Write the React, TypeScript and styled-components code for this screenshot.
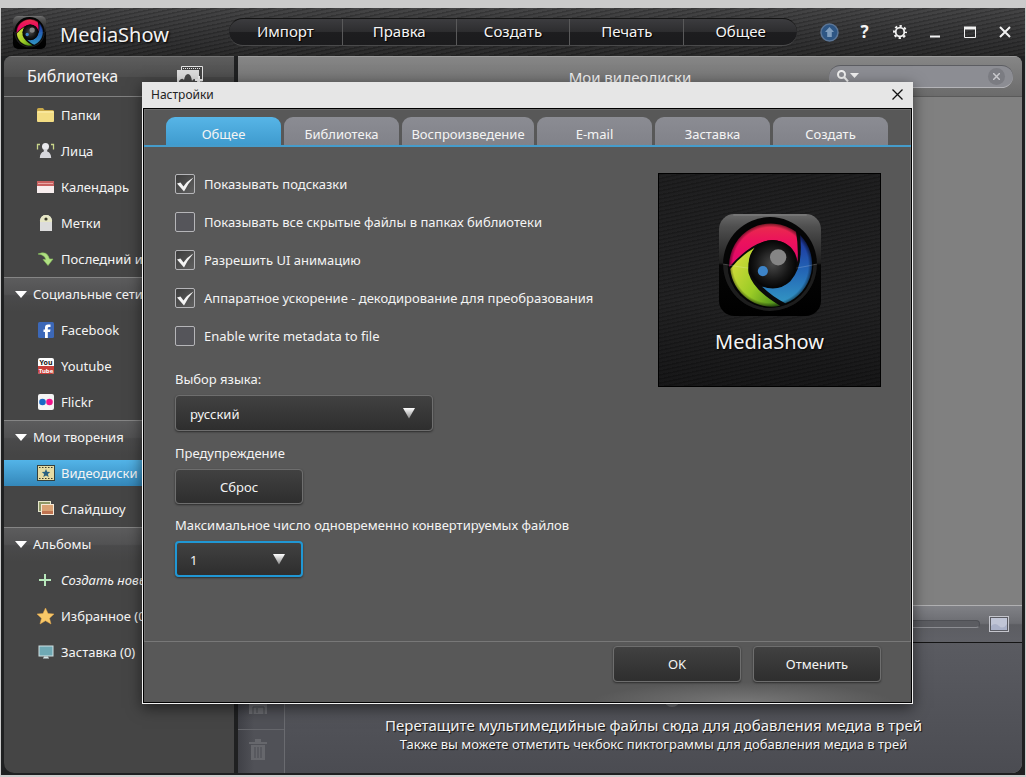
import React, { useId } from "react";
import styled, { createGlobalStyle, css } from "styled-components";

const GlobalStyle = createGlobalStyle`
  *, *::before, *::after { box-sizing: border-box; }
  html, body { margin: 0; padding: 0; background: #cbcbcb; }
  body, button, input, select {
    font-family: "Noto Sans", "Open Sans", "Liberation Sans", sans-serif;
    font-size: 13px;
    line-height: 20px;
    color: #f4f4f4;
  }
  button { padding: 0; border: 0; background: none; cursor: pointer; }
  ul { list-style: none; margin: 0; padding: 0; }
  h1, h2, h3, p { margin: 0; font-weight: 400; }
  svg { display: block; flex: none; }
`;

const weave = css`
  background-image:
    repeating-linear-gradient(168deg, rgba(0, 0, 0, 0.14) 0 1px, rgba(255, 255, 255, 0.02) 2px 4px),
    linear-gradient(#414142, #323233 50%, #262626);
`;

const Page = styled.div`
  position: relative;
  min-height: 100vh;
  padding: 8px 1px 2px;
  display: flex;
`;

const AppWindow = styled.div`
  flex: 1;
  min-width: 0;
  display: flex;
  flex-direction: column;
  background: #1f2021;
`;

/* ---------- header ---------- */

const Header = styled.header`
  display: flex;
  align-items: center;
  height: 48px;
  padding: 0 3px 0 12px;
  ${weave}
`;

const Brand = styled.div`
  display: flex;
  align-items: center;
  gap: 14px;
  width: 216px;
  flex: none;
`;

const BrandName = styled.h1`
  font-size: 20px;
  line-height: 28px;
  padding-top: 6px;
  color: #f2f2f2;
  text-shadow: 1px 1px 2px #000;
`;

const MenuBar = styled.nav`
  flex: 1;
  display: flex;
  height: 28px;
  border-radius: 14px;
  overflow: hidden;
  border-top: 1px solid #141414;
  border-bottom: 1px solid #4a4a4b;
  background: linear-gradient(#3c3c3f, #2d2d2f 48%, #1d1d1f 52%, #1b1b1d);
`;

const MenuButton = styled.button`
  flex: 1;
  padding-bottom: 2px;
  font-size: 15px;
  text-shadow: 1px 1px 1px #000;
  & + & { border-left: 1px solid #59595a; }
`;

const WindowControls = styled.div`
  display: flex;
  margin-left: 15px;
`;

const ControlButton = styled.button`
  width: 35px;
  height: 28px;
  display: grid;
  place-items: center;
  font-size: 17px;
  font-weight: 700;
`;

/* ---------- workspace ---------- */

const Workspace = styled.div`
  flex: 1;
  display: flex;
  gap: 4px;
  padding: 0 3px 2px;
`;

const Sidebar = styled.aside`
  width: 230px;
  flex: none;
  background: #454545;
  border-radius: 8px 0 0 10px;
  overflow: hidden;
`;

const SidebarHeader = styled.div`
  display: flex;
  justify-content: space-between;
  align-items: center;
  height: 41px;
  padding: 0 31px 2px 23px;
  border-top: 1px solid #747474;
  border-bottom: 1px solid #818181;
  background: linear-gradient(#5d5d5d, #4e4e4e 50%, #454545 52%, #454545);
`;

const SidebarTitle = styled.h2`
  font-size: 16px;
  line-height: 24px;
`;

const SectionHeader = styled.h3`
  display: flex;
  align-items: center;
  gap: 6px;
  height: 35px;
  padding: 0 0 2px 11px;
  font-size: 13px;
  border-top: 1px solid #858585;
  background: linear-gradient(#5c5c5d, #525253 48%, #4a4a4b 52%, #454545);
`;

const NavItem = styled.li`
  padding: 5px 0;
`;

const NavLink = styled.a<{ $active?: boolean; $italic?: boolean }>`
  display: flex;
  align-items: center;
  gap: 6px;
  height: 26px;
  padding-left: 32px;
  color: #f4f4f4;
  text-decoration: none;
  white-space: nowrap;
  font-style: ${(p) => (p.$italic ? "italic" : "normal")};
  background: ${(p) => (p.$active ? "linear-gradient(#53b4e8, #3487b9)" : "none")};
`;

const Main = styled.main`
  flex: 1;
  min-width: 0;
  display: flex;
  flex-direction: column;
  border-radius: 0 8px 10px 0;
  overflow: hidden;
  background: #808080;
`;

const MainHeader = styled.div`
  display: grid;
  grid-template-columns: 1fr auto 1fr;
  align-items: center;
  height: 41px;
  padding: 0 9px;
  border-top: 1px solid #9b9b9b;
  border-bottom: 1px solid #5a5a5a;
  background: linear-gradient(#868686, #6b6b6b);
`;

const MainTitle = styled.h2`
  grid-column: 2;
  font-size: 15px;
  line-height: 20px;
`;

const SearchBox = styled.label`
  justify-self: end;
  display: flex;
  align-items: center;
  width: 184px;
  height: 23px;
  padding: 0 8px;
  gap: 2px;
  border-radius: 12px;
  border-top: 1px solid #5c5d62;
  border-bottom: 1px solid #b4b4b8;
  background: #8c8d93;
`;

const SearchInput = styled.input`
  flex: 1;
  min-width: 0;
  height: 20px;
  padding: 0 4px;
  border: 0;
  outline: 0;
  background: transparent;
`;

const ClearButton = styled.button`
  width: 17px;
  height: 17px;
  border-radius: 9px;
  display: grid;
  place-items: center;
  background: #7b7c82;
`;

const Canvas = styled.section`
  flex: 1;
`;

const ZoomBar = styled.div`
  display: flex;
  align-items: center;
  justify-content: flex-end;
  gap: 9px;
  height: 38px;
  padding-right: 13px;
  border-top: 1px solid #b0b0b2;
  border-bottom: 1px solid #141414;
  background: linear-gradient(#808186, #6b6c71 48%, #5c5d62 52%, #606167);
`;

const ZoomSlider = styled.input`
  appearance: none;
  width: 120px;
  height: 8px;
  margin: 0;
  border-radius: 4px;
  border: 1px solid #4e4f54;
  border-bottom-color: #8c8d92;
  background: #5b5c61;
  &::-webkit-slider-thumb {
    appearance: none;
    width: 8px;
    height: 8px;
    border-radius: 4px;
    background: #9a9ba0;
  }
`;

const Tray = styled.section`
  display: flex;
  height: 130px;
  background: linear-gradient(#5a5b61, #4b4c52);
`;

const TrayTools = styled.div`
  width: 47px;
  flex: none;
  display: flex;
  flex-direction: column;
  justify-content: flex-end;
  border-right: 1px solid #6a6b70;
  background: linear-gradient(90deg, #404147, #505157 16px);
`;

const TrayTool = styled.button`
  height: 44px;
  padding: 0 6px 4px 0;
  display: grid;
  place-items: center;
  & + & { border-top: 1px solid #65666b; }
`;

const TrayHint = styled.div`
  flex: 1;
  display: flex;
  flex-direction: column;
  align-items: center;
  justify-content: flex-end;
  padding-bottom: 20px;
  text-shadow: 1px 1px 1px #111;
`;

const TrayKnob = styled.span`
  width: 16px;
  height: 16px;
  margin: 0 0 8px 36px;
  border-radius: 8px;
  background: #77787d;
`;

const TrayLead = styled.p`
  font-size: 15px;
  line-height: 20px;
`;

const TrayNote = styled.p`
  font-size: 13px;
  line-height: 18px;
`;

/* ---------- settings dialog ---------- */

const DialogLayer = styled.div`
  position: absolute;
  inset: 0;
  padding: 82px 113px 0 142px;
`;

const Dialog = styled.div`
  padding: 0 1px 1px;
  background: #f2f2f2;
  box-shadow: 0 4px 14px rgba(0, 0, 0, 0.55);
`;

const DialogTitleBar = styled.div`
  display: flex;
  align-items: center;
  justify-content: space-between;
  height: 26px;
  margin: 0 -1px;
  padding: 0 10px 2px 9px;
  background: #e6e6e6;
`;

const DialogTitle = styled.h2`
  font-size: 12px;
  line-height: 18px;
  padding-top: 2px;
  color: #222;
`;

const DialogClose = styled.button`
  width: 12px;
  height: 22px;
  display: grid;
  place-items: center;
`;

const DialogBody = styled.div`
  border: 1px solid #000;
  background: #585858;
  box-shadow: inset 0 0 0 1px #6c6c6c;
`;

const TabList = styled.div`
  display: flex;
  gap: 3px;
  padding: 8px 23px 0 22px;
  border-bottom: 2px solid #459ccb;
`;

const Tab = styled.button<{ $active?: boolean; $wide?: boolean }>`
  flex: ${(p) => (p.$wide ? "132 1 0" : "115 1 0")};
  min-width: 0;
  height: 28px;
  padding-top: 5px;
  line-height: 22px;
  border-radius: 9px 9px 0 0;
  background: ${(p) => (p.$active ? "linear-gradient(#57b5e7, #3f9bce)" : "linear-gradient(#8b8c93, #818289)")};
`;

const Panel = styled.div`
  display: flex;
  justify-content: space-between;
  align-items: flex-start;
  height: 494px;
  padding: 26px 30px 0 31px;
`;

const Settings = styled.div`
  display: flex;
  flex-direction: column;
  align-items: flex-start;
`;

const CheckList = styled.div`
  display: flex;
  flex-direction: column;
  gap: 16px;
  margin-bottom: 22px;
`;

const CheckRow = styled.label`
  display: flex;
  align-items: center;
  gap: 9px;
  height: 22px;
  white-space: nowrap;
`;

const CheckMark = styled.span`
  display: grid;
  & > * { grid-area: 1 / 1; }
  & > input:not(:checked) + svg { visibility: hidden; }
  & > svg { pointer-events: none; }
`;

const CheckInput = styled.input`
  appearance: none;
  width: 20px;
  height: 20px;
  margin: 0;
  border: 1px solid #b5b5b8;
  border-radius: 2px;
  background: #55555a;
  &:checked { background: linear-gradient(135deg, #3c3c3c, #606060); }
`;

const FieldLabel = styled.label`
  height: 20px;
  margin-bottom: 6px;
  white-space: nowrap;
`;

const raised = css`
  border: 1px solid #6e6e6e;
  border-radius: 4px;
  background: linear-gradient(#414141, #2e2e2e);
  box-shadow: 0 1px 2px rgba(0, 0, 0, 0.5);
`;

const SelectWrap = styled.span<{ $wide?: boolean }>`
  display: grid;
  align-items: center;
  width: ${(p) => (p.$wide ? "258px" : "128px")};
  margin-bottom: 12px;
  & > * { grid-area: 1 / 1; }
  & > svg { justify-self: end; margin-right: 18px; pointer-events: none; }
`;

const SelectBox = styled.select<{ $focused?: boolean }>`
  appearance: none;
  width: 100%;
  height: 36px;
  padding: 2px 14px 0;
  outline: 0;
  ${raised}
  ${(p) => p.$focused && css`
    border: 2px solid #2097d4;
    padding-left: 13px;
  `}
`;

const PushButton = styled.button`
  width: 128px;
  height: 36px;
  ${raised}
`;

const FieldButton = styled(PushButton)`
  height: 35px;
  margin-bottom: 11px;
`;

const Preview = styled.figure`
  display: flex;
  flex-direction: column;
  align-items: center;
  width: 223px;
  height: 214px;
  margin: 0;
  padding-top: 40px;
  border: 1px solid #000;
  background-image:
    repeating-linear-gradient(168deg, rgba(0, 0, 0, 0.12) 0 1px, rgba(255, 255, 255, 0.01) 2px 4px),
    linear-gradient(#1c1c1d, #1f1f20 60%, #141415);
`;

const PreviewCaption = styled.figcaption`
  margin-top: 12px;
  font-size: 20px;
  line-height: 28px;
  text-shadow: 1px 1px 2px #000;
`;

const DialogFooter = styled.div`
  display: flex;
  justify-content: flex-end;
  gap: 12px;
  height: 61px;
  padding: 4px 30px 0;
  border-top: 1px solid #787878;
  background: radial-gradient(ellipse 150px 20px at 78% 100%, #777 0, #585858 100%);
`;

/* ---------- drawings ---------- */

function Logo({ size }: { size: number }) {
  const id = useId().replace(/[^a-zA-Z0-9]/g, "");
  const u = (n: string) => `url(#${id}${n})`;
  return (
    <svg width={size} height={size} viewBox="0 0 100 100" aria-hidden="true">
      <defs>
        <linearGradient id={id + "case"} x1="0" y1="0" x2="0" y2="1">
          <stop offset="0" stopColor="#6a6a6a" />
          <stop offset="0.12" stopColor="#505050" />
          <stop offset="0.48" stopColor="#1e1e1e" />
          <stop offset="0.5" stopColor="#050505" />
          <stop offset="1" stopColor="#000" />
        </linearGradient>
        <linearGradient id={id + "pink"} x1="0" y1="0" x2="0" y2="1">
          <stop offset="0" stopColor="#e8304a" />
          <stop offset="0.4" stopColor="#ec125c" />
          <stop offset="1" stopColor="#e0046e" />
        </linearGradient>
        <linearGradient id={id + "green"} x1="0" y1="0.3" x2="1" y2="1">
          <stop offset="0" stopColor="#d2dc3a" />
          <stop offset="0.5" stopColor="#9acb26" />
          <stop offset="1" stopColor="#41891a" />
        </linearGradient>
        <linearGradient id={id + "blue"} x1="0" y1="0" x2="0" y2="1">
          <stop offset="0" stopColor="#1c2f9c" />
          <stop offset="0.5" stopColor="#2363b4" />
          <stop offset="1" stopColor="#3296c4" />
        </linearGradient>
        <radialGradient id={id + "eye"}>
          <stop offset="0" stopColor="#4a4a4a" />
          <stop offset="0.7" stopColor="#161616" />
          <stop offset="1" stopColor="#050505" />
        </radialGradient>
        <radialGradient id={id + "rim"}>
          <stop offset="0.88" stopColor="#000" stopOpacity="0" />
          <stop offset="1" stopColor="#000" stopOpacity="0.7" />
        </radialGradient>
      </defs>
      <rect width="100" height="100" rx="15" fill={u("case")} />
      <circle cx="50" cy="49" r="46" fill="#050505" />
      <path d="M4 49a46 46 0 0 0 92 0" fill="#1d1d1d" />
      <circle cx="50.500" cy="50" r="42" fill="#0a0a0a" />
      <path d="M10 52A41 41 0 0 1 75.500 17.500Q78 32 77 47Q74 27 52 25.500Q32 27 10 52Z" fill={u("pink")} />
      <path d="M79.500 20.500A41 41 0 0 1 65 87.500Q52 81 42 71Q58 77 70 66Q80 54 80 38Q80.500 30 79.500 20.500Z" fill={u("blue")} />
      <path d="M11 54Q21 41 35 33Q27 46 29 58Q34 75 60 90A41 41 0 0 1 11 54Z" fill={u("green")} />
      <circle cx="50.500" cy="50" r="42" fill={u("rim")} />
      <circle cx="52.500" cy="49" r="23.500" fill={u("eye")} />
      <path d="M4 49Q26 53 29 53M76 53Q88 51 96 49" stroke="#fff" fill="none" opacity="0.18" />
      <circle cx="58" cy="42.500" r="8" fill="#858585" />
      <circle cx="43" cy="56" r="5" fill="#3d84c8" />
      <path d="M14 1H86" stroke="#8a8a8a" strokeWidth="1.500" opacity="0.5" />
    </svg>
  );
}

const iconShapes: Record<string, React.ReactNode> = {
  folder: (
    <>
      <path d="M1 3.500Q1 2 2.500 2H7l1.500 2H16.500Q18 4 18 5.500V6H1Z" fill="#c9a94a" />
      <rect x="1" y="5" width="17" height="11" rx="1" fill="#f3dd83" />
      <path d="M1.500 6H17.500" stroke="#fff1b4" />
    </>
  ),
  faces: (
    <>
      <path d="M4 2.500H1.500V7.500M15 2.500h2.500V7.500" fill="none" stroke="#c9d68a" strokeWidth="1.300" />
      <circle cx="9.500" cy="4.500" r="3.500" fill="#e8e8ec" />
      <path d="M7.800 7h3.400v2.500q3.800 1 4 6.500H3.800q.2-5.500 4-6.500Z" fill="#d6d6db" />
    </>
  ),
  calendar: (
    <>
      <rect x="1" y="3" width="17" height="12" fill="#f8eeee" />
      <rect x="1" y="3" width="17" height="5" fill="#c8605f" />
      <path d="M2 5.500H17" stroke="#e8a8a6" />
    </>
  ),
  tag: (
    <>
      <path d="M4 17V6.500Q5 1 10 1T16 6.500V17Z" fill="#dcdcdc" />
      <path d="M4 8V6.500Q5 1 10 1T16 6.500V8Z" fill="#e6e6c4" />
      <circle cx="10" cy="5" r="1.600" fill="#3a3a2a" />
    </>
  ),
  recent: (
    <path d="M2 4Q11 0 13.500 9H17L12 15.500 7 9.500H9.800Q8.500 4.500 2 4Z" fill="#b0e082" stroke="#86bd5c" strokeWidth="0.600" />
  ),
  facebook: (
    <>
      <rect x="2" y="1" width="16" height="16" rx="1.500" fill="#3c68b8" />
      <path d="M9 17V11H7.500V8.500H9V6.500Q9 3.500 12 3.500h2.500V6h-1.500q-1.200 0-1.200 1v1.500h2.700L14 11H11.800v6Z" fill="#fff" />
    </>
  ),
  youtube: (
    <>
      <rect x="2" y="1" width="16" height="16" rx="2" fill="#fff" />
      <path d="M2 9H18V15q0 2-2 2H4q-2 0-2-2Z" fill="#c8403a" />
      <text x="10" y="7.500" textAnchor="middle" fontSize="7" fontWeight="700" fill="#111">You</text>
      <text x="10" y="15.500" textAnchor="middle" fontSize="6" fontWeight="700" fill="#fff">Tube</text>
    </>
  ),
  flickr: (
    <>
      <rect x="2" y="1" width="16" height="16" rx="2" fill="#f4f4f4" />
      <circle cx="6.500" cy="9" r="3.300" fill="#1767c4" />
      <circle cx="13.500" cy="9" r="3.300" fill="#f0148a" />
    </>
  ),
  discs: (
    <>
      <rect x="1.500" y="1.500" width="17" height="15" fill="#e5dca4" stroke="#36413c" />
      <path d="M3 3.500H17M3 14.500H17" stroke="#3d3d2c" strokeDasharray="1.500 1.500" />
      <path d="m10 5 1.200 2.800 3 .2-2.300 2 .8 3L10 11.400 7.300 13l.8-3-2.300-2 3-.2Z" fill="#29617f" />
    </>
  ),
  slides: (
    <>
      <rect x="2.500" y="1.500" width="12" height="10" fill="#8f9866" stroke="#e6e6cc" />
      <rect x="5.500" y="4.500" width="12" height="10" fill="#d9a274" stroke="#f6ead8" />
      <path d="M6 11H17v3H6Z" fill="#c07350" />
    </>
  ),
  plus: <path d="M9 3V15M3 9H15" stroke="#b8e8bc" strokeWidth="2" />,
  star: <path d="m9.500 1 2.500 5.500 6 .5-4.500 4.200L15 17l-5.500-3.200L4 17l1.500-5.800L1 7l6-.5Z" fill="#f8c868" stroke="#e4a64a" strokeWidth="0.500" />,
  monitor: (
    <>
      <rect x="3" y="3" width="14" height="10" fill="#6fa9b4" stroke="#d2e2e4" />
      <path d="M8 13.500h4V14.500h1v1H7v-1h1Z" fill="#d2e2e4" />
    </>
  ),
};

function NavIcon({ name }: { name: string }) {
  return (
    <svg width="19" height="18" viewBox="0 0 19 18" overflow="visible" aria-hidden="true">
      {iconShapes[name]}
    </svg>
  );
}

function DropArrow() {
  const id = useId().replace(/[^a-zA-Z0-9]/g, "");
  return (
    <svg width="12" height="11" viewBox="0 0 12 11" aria-hidden="true">
      <linearGradient id={id} x1="0" y1="0" x2="0" y2="1">
        <stop offset="0" stopColor="#fff" />
        <stop offset="1" stopColor="#8a8a8a" />
      </linearGradient>
      <path d="M0 0H12L6 10.500Z" fill={`url(#${id})`} />
    </svg>
  );
}

function GearIcon() {
  return (
    <svg width="16" height="16" viewBox="0 0 16 16" fill="none" stroke="#f2f2f2" aria-hidden="true">
      <circle cx="8" cy="8" r="4.300" strokeWidth="1.800" />
      <circle cx="8" cy="8" r="6" strokeWidth="2" strokeDasharray="2.356 2.356" strokeDashoffset="1.178" />
    </svg>
  );
}

function CheckIcon() {
  return (
    <svg width="20" height="20" viewBox="0 0 20 20" aria-hidden="true">
      <path d="M2 9.500 5.500 8.500 8.500 12.500Q12 7 18.500 3.500 12.500 10 9 17.500Z" fill="#f4f4f4" />
    </svg>
  );
}

/* ---------- data ---------- */

type Entry = { icon: string; label: string; active?: boolean; italic?: boolean };

const groups: { title?: string; items: Entry[] }[] = [
  {
    items: [
      { icon: "folder", label: "Папки" },
      { icon: "faces", label: "Лица" },
      { icon: "calendar", label: "Календарь" },
      { icon: "tag", label: "Метки" },
      { icon: "recent", label: "Последний импорт" },
    ],
  },
  {
    title: "Социальные сети",
    items: [
      { icon: "facebook", label: "Facebook" },
      { icon: "youtube", label: "Youtube" },
      { icon: "flickr", label: "Flickr" },
    ],
  },
  {
    title: "Мои творения",
    items: [
      { icon: "discs", label: "Видеодиски", active: true },
      { icon: "slides", label: "Слайдшоу" },
    ],
  },
  {
    title: "Альбомы",
    items: [
      { icon: "plus", label: "Создать новый", italic: true },
      { icon: "star", label: "Избранное (0)" },
      { icon: "monitor", label: "Заставка (0)" },
    ],
  },
];

const menus = ["Импорт", "Правка", "Создать", "Печать", "Общее"];
const tabs = ["Общее", "Библиотека", "Воспроизведение", "E-mail", "Заставка", "Создать"];

const checks = [
  { label: "Показывать подсказки", on: true },
  { label: "Показывать все скрытые файлы в папках библиотеки", on: false },
  { label: "Разрешить UI анимацию", on: true },
  { label: "Аппаратное ускорение - декодирование для преобразования", on: true },
  { label: "Enable write metadata to file", on: false },
];

/* ---------- parts ---------- */

function AppHeader() {
  return (
    <Header>
      <Brand>
        <Logo size={33} />
        <BrandName>MediaShow</BrandName>
      </Brand>
      <MenuBar>
        {menus.map((m) => <MenuButton key={m}>{m}</MenuButton>)}
      </MenuBar>
      <WindowControls>
        <ControlButton aria-label="Обновление">
          <svg width="19" height="19" viewBox="0 0 19 19">
            <circle cx="9.500" cy="9.500" r="8.500" fill="#2e5684" stroke="#5a7596" strokeWidth="1.500" />
            <path d="M9.500 4 14 9H11.800v5H7.200V9H5Z" fill="#7f9dbd" />
          </svg>
        </ControlButton>
        <ControlButton aria-label="Справка">?</ControlButton>
        <ControlButton aria-label="Параметры"><GearIcon /></ControlButton>
        <ControlButton aria-label="Свернуть">
          <svg width="12" height="12"><path d="M1 10.500H11" stroke="#f2f2f2" strokeWidth="2" /></svg>
        </ControlButton>
        <ControlButton aria-label="Развернуть">
          <svg width="12" height="12"><path d="M0.500 1V11.500H11.500V1" fill="none" stroke="#f2f2f2" /><path d="M0 2H12" stroke="#f2f2f2" strokeWidth="3" /></svg>
        </ControlButton>
        <ControlButton aria-label="Закрыть">
          <svg width="12" height="12"><path d="M1 1 11 11M11 1 1 11" stroke="#f2f2f2" strokeWidth="2" /></svg>
        </ControlButton>
      </WindowControls>
    </Header>
  );
}

function Library() {
  return (
    <Sidebar>
      <SidebarHeader>
        <SidebarTitle>Библиотека</SidebarTitle>
        <svg width="26" height="20" viewBox="0 0 26 20" aria-hidden="true">
          <path d="M4.500 4V0.500H25.500V15H22" fill="#444" stroke="#e2e2e2" />
          <path d="M6 2.500H24" stroke="#e8e8e8" strokeDasharray="1 1" />
          <rect y="4" width="22" height="15" fill="#dcdcdc" />
          <path d="M2 19V15q3-4 5-1 1-6 4-6t4 7q2-4 5 0v4Z" fill="#484848" />
          <path d="M22 10v8M18 14h8" stroke="#f0f0f0" strokeWidth="2" />
        </svg>
      </SidebarHeader>
      {groups.map((g, i) => (
        <section key={i}>
          {g.title && (
            <SectionHeader>
              <svg width="12" height="7" aria-hidden="true"><path d="M0 0H12L6 7Z" fill="#fff" /></svg>
              {g.title}
            </SectionHeader>
          )}
          <ul>
            {g.items.map((it) => (
              <NavItem key={it.label}>
                <NavLink href="#" $active={it.active} $italic={it.italic}>
                  <NavIcon name={it.icon} />
                  {it.label}
                </NavLink>
              </NavItem>
            ))}
          </ul>
        </section>
      ))}
    </Sidebar>
  );
}

function MediaArea() {
  return (
    <Main>
      <MainHeader>
        <MainTitle>Мои видеодиски</MainTitle>
        <SearchBox>
          <svg width="22" height="13" viewBox="0 0 22 13" aria-hidden="true">
            <circle cx="4.500" cy="4.500" r="3.500" fill="none" stroke="#f0f0f0" strokeWidth="2" />
            <path d="m7 7 4 4.500" stroke="#f0f0f0" strokeWidth="2" />
            <path d="M13 3h9l-4.500 5Z" fill="#f0f0f0" />
          </svg>
          <SearchInput type="text" aria-label="Поиск" />
          <ClearButton aria-label="Очистить">
            <svg width="7" height="7"><path d="M0 0 7 7M7 0 0 7" stroke="#c8c8cc" strokeWidth="1.500" /></svg>
          </ClearButton>
        </SearchBox>
      </MainHeader>
      <Canvas />
      <ZoomBar>
        <ZoomSlider type="range" defaultValue={0} aria-label="Размер пиктограмм" />
        <svg width="20" height="16" viewBox="0 0 20 16" aria-hidden="true">
          <rect x="0.500" y="0.500" width="19" height="15" fill="#5a5b62" stroke="#c4c5cc" />
          <rect x="2" y="2" width="16" height="12" fill="#c0c5d6" />
          <path d="M2 14V10q4-4 8 0t8-2v6Z" fill="#aab1c8" />
        </svg>
      </ZoomBar>
      <Tray>
        <TrayTools>
          <TrayTool aria-label="Сохранить">
            <svg width="20" height="20" viewBox="0 0 20 20">
              <path d="M1 1H19V19H1Z" fill="#6b6c71" />
              <path d="M5 1v6h10V1M5 19v-7h11v7M9 13v5" fill="none" stroke="#4b4c52" />
            </svg>
          </TrayTool>
          <TrayTool aria-label="Удалить">
            <svg width="18" height="22" viewBox="0 0 18 22">
              <path d="M2 6H16V21H2ZM0 3H18V5H0ZM6 0h6v3H6Z" fill="#66676c" />
              <path d="M6 8V19M9 8V19M12 8V19" stroke="#4b4c52" />
            </svg>
          </TrayTool>
        </TrayTools>
        <TrayHint>
          <TrayKnob />
          <TrayLead>Перетащите мультимедийные файлы сюда для добавления медиа в трей</TrayLead>
          <TrayNote>Также вы можете отметить чекбокс пиктограммы для добавления медиа в трей</TrayNote>
        </TrayHint>
      </Tray>
    </Main>
  );
}

function SettingsDialog() {
  return (
    <DialogLayer>
      <Dialog role="dialog" aria-labelledby="settings-title">
        <DialogTitleBar>
          <DialogTitle id="settings-title">Настройки</DialogTitle>
          <DialogClose aria-label="Закрыть настройки">
            <svg width="11" height="11"><path d="M0.500 0.500 10.500 10.500M10.500 0.500 0.500 10.500" stroke="#111" strokeWidth="1.300" /></svg>
          </DialogClose>
        </DialogTitleBar>
        <DialogBody>
          <TabList role="tablist">
            {tabs.map((t, i) => (
              <Tab key={t} role="tab" aria-selected={i === 0} $active={i === 0} $wide={t.length > 12}>{t}</Tab>
            ))}
          </TabList>
          <Panel>
            <Settings>
              <CheckList>
                {checks.map((c) => (
                  <CheckRow key={c.label}>
                    <CheckMark>
                      <CheckInput type="checkbox" defaultChecked={c.on} />
                      <CheckIcon />
                    </CheckMark>
                    {c.label}
                  </CheckRow>
                ))}
              </CheckList>
              <FieldLabel htmlFor="language">Выбор языка:</FieldLabel>
              <SelectWrap $wide>
                <SelectBox id="language"><option>русский</option></SelectBox>
                <DropArrow />
              </SelectWrap>
              <FieldLabel htmlFor="reset">Предупреждение</FieldLabel>
              <FieldButton id="reset" aria-label="Сброс">Сброс</FieldButton>
              <FieldLabel htmlFor="parallel">Максимальное число одновременно конвертируемых файлов</FieldLabel>
              <SelectWrap>
                <SelectBox id="parallel" $focused><option>1</option></SelectBox>
                <DropArrow />
              </SelectWrap>
            </Settings>
            <Preview>
              <Logo size={102} />
              <PreviewCaption>MediaShow</PreviewCaption>
            </Preview>
          </Panel>
          <DialogFooter>
            <PushButton>OK</PushButton>
            <PushButton>Отменить</PushButton>
          </DialogFooter>
        </DialogBody>
      </Dialog>
    </DialogLayer>
  );
}

export default function App() {
  return (
    <>
      <GlobalStyle />
      <Page>
        <AppWindow>
          <AppHeader />
          <Workspace>
            <Library />
            <MediaArea />
          </Workspace>
        </AppWindow>
        <SettingsDialog />
      </Page>
    </>
  );
}
